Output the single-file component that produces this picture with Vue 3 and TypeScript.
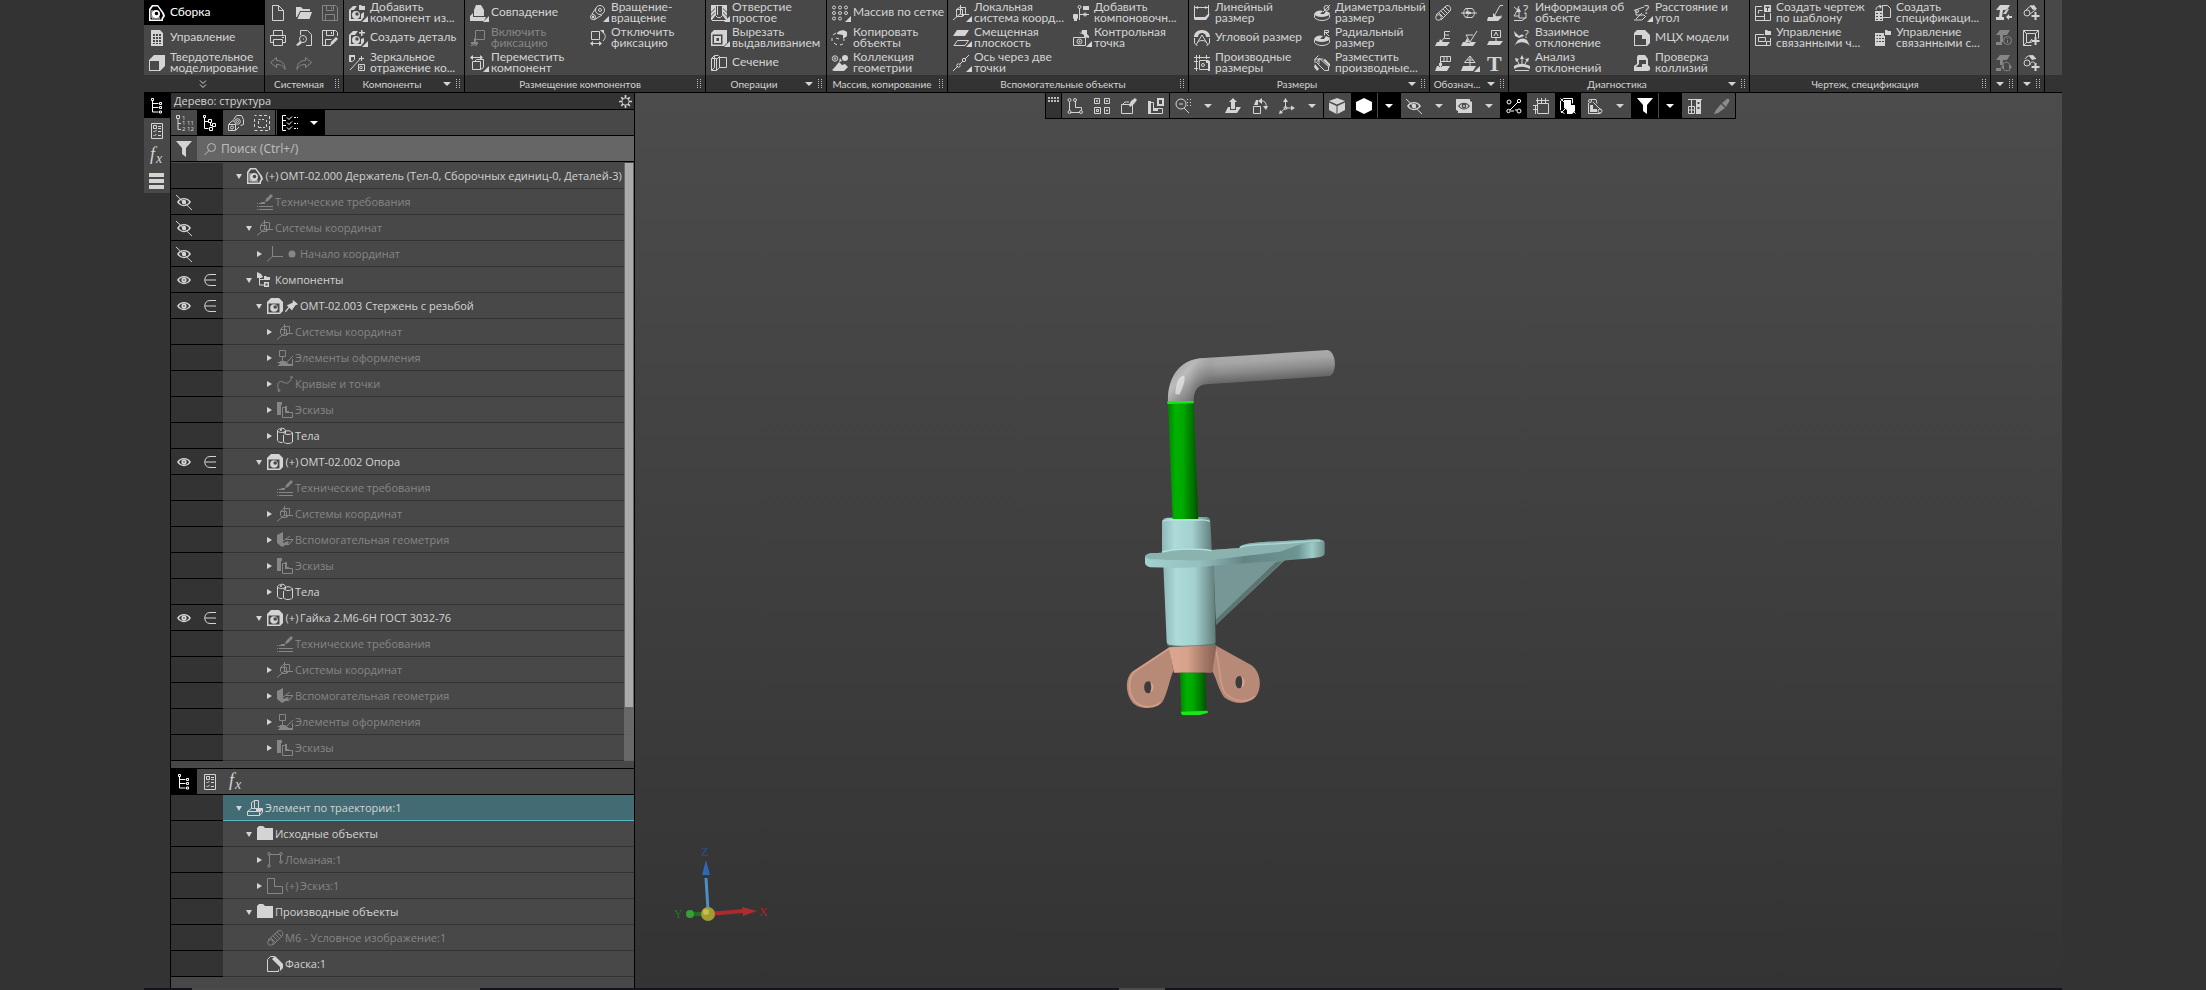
<script setup lang="ts">
import { ref } from 'vue'

interface Glyph { s?: string; f?: string; t?: { x: number; y: number; size: number; text: string }[] }
interface Cmd { icon: string; label?: string; title?: string; off?: boolean; more?: boolean }
interface Group { title: string; columns: Cmd[][]; arrow?: boolean; compact?: boolean }
interface Node { level: number; icon: string; label: string; arrow?: 'open' | 'closed'; dim?: boolean; eye?: 'on' | 'off'; member?: boolean; mark?: 'plus' | 'pin' | 'dot'; selected?: boolean }

const c = (x: number, y: number, r: number) => `M${x - r} ${y}a${r} ${r} 0 1 0 ${2 * r} 0a${r} ${r} 0 1 0 ${-2 * r} 0z`

const glyphs: Record<string, Glyph> = {
  assembly: { f: 'M0 4L3 0H9L15 8L16 11L14 14V16H0ZM1.500 5V14.500H12.500V13L14 11L13 8L8.500 1.500H4Z' + c(7, 9, 4) + c(7.5, 8.5, 1.8), s: 'M3 5v8h8' },
  sheet: { f: 'M2 0H11L14 3V16H2ZM4 4H6V6H4ZM7 4H9V6H7ZM10 4H12V6H10ZM4 7H6V9H4ZM7 7H9V9H7ZM10 7H12V9H10ZM4 10H6V12H4ZM7 10H9V12H7ZM10 10H12V12H10ZM4 13H6V14H4ZM7 13H9V14H7ZM10 13H12V14H10Z' },
  solid: { f: 'M0 5L5 0H16V11L11 16H0ZM1 6V15H10V6Z' },
  newDoc: { s: 'M2.500.500h6l5 5v10h-11zM8.500.500v5h5' },
  folderOpen: { f: 'M0 2H5L7 4H14V6H4L1 12H0ZM4.500 7H16L13.500 14H1.500Z' },
  save: { s: 'M.500.500h13l2 2v13H.500zM4.500.500v5h7v-5M3.500 15.500v-6h9v6M9.500 2v2' },
  saveAs: { s: 'M9 15.500H.500V.500h13l2 2V6M4.500.500v5h7v-5M3.500 15.500v-6h6M9.500 2v2', f: 'M8 16L9 12L14 7L16 9L11 14Z' },
  print: { s: 'M3.500 5.500v-5h9v5M3.500 12.500h-3v-7h15v7h-3M3.500 9.500h9v6h-9zM12 7.500h2' },
  preview: { s: 'M4.500 5V.500h7l4 4v11H10' + c(7, 9, 3.5) + 'M7 9h1', f: 'M4 11L6 13L2 16L0 15Z' },
  undo: { s: 'M6.500 2.500l-6 5l6 5v-3c4 0 7 1 8.500 5c0-6-3-9-8.500-9z' },
  redo: { s: 'M9.500 2.500l6 5l-6 5v-3c-4 0-7 1-8.500 5c0-6 3-9 8.500-9z' },
  addPart: { f: 'M0 5L4 1H8L5 5H2V14H12V9L15 7V12L12 16H0Z' + c(7, 10, 4) + c(8, 9, 1.7) + 'M10 0H12L13 1H16V5H10Z' },
  newPart: { f: 'M0 5L4 1H9L6 5H2V14H12V9L15 8V12L12 16H0Z' + c(7, 10, 4) + c(8, 9, 1.7) + 'M12 0H13.500V2H16V3.500H13.500V6H12V3.500H10V2H12Z' },
  mirror: { s: 'M.500.500h5v4l-2 2h-3zM1 15L13 2M9.500 9.500h6v6h-6z' + c(12, 12.500, 1.300), f: 'M12 1h1v2h2v1h-2v2h-1v-2h-2v-1h2zM0 0h6v2h-4v4h-2z' },
  mate: { f: 'M6 0H11L14 5V11H4V5ZM0 11L3 8V12H16L14 16H0Z' },
  fix: { s: 'M5.500.500h9v9h-9zM4.500 9v3', f: 'M1 12H8V14H1ZM0 16L3 14H5L2 16ZM4 16L6 14H8L6 16ZM4 8h2v4h-2z' },
  move: { s: 'M2.500 6.500h8v8h-8zM2 2.500h9M4.500 6.500l2-2h7v8l-3 2', f: 'M0 2.500L3 0V5ZM13 2.500L10 0V5Z' },
  rotateMate: { s: c(10, 5, 4.500) + c(3, 12, 2.500) + c(10, 5, 1.500) + 'M2 9L6 3M4 15l8-5', f: c(3, 12, 1.2) },
  unfix: { s: 'M1.500 1.500h8v8h-8zM13 2c3 3 3 6 0 9M1 13.500h10', f: 'M0 13.500L3 11V16ZM12 13.500L9 11V16ZM10 0H14V4Z' },
  hole: { s: 'M.500.500h15M4.500.500v10l2 2h3l2-2v-10M1 15.500h14', f: 'M0 0H4V3L0 7ZM0 8L4 4V7L0 11ZM0 12L4 8V11L1 15H0ZM16 0H12V3L16 7ZM16 8L12 4V7L16 11ZM16 12L12 8V11L15 15H16ZM6 1h1v9H6z' },
  cut: { f: 'M0 3L3 0H16V13L13 16H0ZM1.500 4.500V14.500H11.500V4.500ZM3 6H10V13H3ZM5.500 8V11H8V8Z' },
  section: { s: 'M.500 3.500l3-3v12l-3 3zM.500 3.500h5v12h-5M8.500 2.500h7v10h-7zM5.500 4.500l3-3v11l-3 3zM3.500.500h4' },
  array: { s: c(2, 2.500, 1.500) + c(8, 2.500, 1.500) + c(14, 2.500, 1.500) + c(2, 8, 1.500) + c(8, 8, 1.500) + c(14, 8, 1.500) + c(2, 13.500, 1.500) + c(8, 13.500, 1.500) },
  copyObj: { f: 'M5 3C7 0 12-1 15 2V6L11 9V5L5 4Z', s: 'M4 3L1 5M0 8v3M2 13l3 2M8 15l3-1M12 11V9M4 8l3 1' },
  collection: { s: c(3, 3.500, 2.700) + c(3, 3.500, .8), f: c(13, 3, 3) + 'M0 15L3 12L7 7L10 10L13 9L16 12L12 16H2ZM8 3L10 6L7 7Z' },
  localCs: { s: 'M7.500 0v9M7.500 9.500H16M0 15L7 9M3.500 8.500v-4l3-2h6v6l-3 3h-6zM3.500 4.500h6v7' },
  offsetPlane: { f: 'M4 0H16L12 6H0Z', s: 'M4.500 10.500h11l-3.500 5H1z' },
  axis: { s: 'M0 16L5 11M7 9l3-3M12 4l4-4' + c(5.500, 10.500, 1.700) + c(11, 5, 1.700) },
  layout: { s: 'M6.500 3v12M6.500 9.500H16' + c(6.500, 2, 1.500) + c(12, 9.500, 1.500) + 'M.500 9.500h4v4h-4z', f: 'M10 1h6v4h-6zM1 10h3v6h-3z' },
  checkpoint: { s: 'M.500 7.500h12v8H.500z' + c(6.500, 11.500, 2.500), f: 'M6 2L8 4L9 0H14V4L16 6V8L11 7V5Z' + c(6.500, 11.500, 1) },
  linear: { s: 'M.500.500v14M14.500 0v10M1 2.500h13M.500 13.500h11l4-4', f: 'M1 12H11L15 8V11L12 15H1ZM1 2.500l3-1.500v3zM14 2.500l-3-1.500v3z' },
  angular: { f: 'M8 0C14 0 16 4 16 7H12C12 4 10 3 8 3S4 4 4 7H0C0 4 2 0 8 0Z', s: 'M2 15L8 5l6 10M4 12c2-2 6-2 8 0M.500 8v5l3 3M15.500 8v5l-3 3' },
  derived: { s: 'M0 2.500h16M2.500 0v16M5.500 0v4M12.500 0v4M0 6.500h4M0 13.500h4M5.500 5.500h9v9h-9z' + c(9, 10, 1.500), f: 'M12 6H16V16H14V8H12Z' },
  diameter: { s: c(12.500, 3, 2.500) + 'M9 7L16 0M.500 9.500v3c3 4 12 4 15 0v-3', f: 'M0 9C2 5 7 5 9 6L6 9L10 9L12 6L16 8C15 13 2 13 0 9Z' },
  radial: { s: 'M10.500 5.500v-5h4v2h-4M12 3l3 3M.500 9.500v3c3 4 12 4 15 0v-3', f: 'M0 9C2 5 7 5 9 6L6 9L10 9L12 6L16 8C15 13 2 13 0 9Z' },
  place: { s: 'M.500 4.500l4-4M1 8V4h4M5.500 3.500l9 8v4h-4l-8-8zM5 9V4h4', f: 'M11 4L16 9V12L9 5ZM1 9L5 14L3 16L0 12Z' },
  thread: { s: 'M1 10L11 1c3-2 6 2 4 5L6 15M4 8l5 5M6 6l5 5M8 4l5 5M10 2l5 5' + c(3.500, 12.500, 2.800) },
  centre: { s: 'M5 3.500h6c3 1 3 8 0 9H5M0 8h16M5 3.500c-3 1-3 8 0 9c3-1 3-8 0-9z', f: 'M5 6L10 7V9H5Z' },
  leader: { s: 'M16 .500h-3l-6 11M9 12l6-1', f: 'M1 12H15L11 16H0ZM6 8L10 12H6Z' },
  leaderE: { s: 'M15 1.500H9.500v7H15M9.500 5H14M9 8l-4 5', f: 'M2 12H15L12 16H0ZM5 9L8 12H4Z' },
  rough: { s: 'M16 1L9 12L5 5h7', f: 'M2 12H15L12 16H0ZM6 8L9 13L4 12Z' },
  base: { s: 'M4.500.500h9v7h-9zM9 8v4M7 6l2-4l2 4', f: 'M2 11H16L13 15H0Z' },
  tolerance: { s: 'M5.500 1.500h10v5h-10zM9 2v4M12 2v4M5.500 6v7', f: 'M2 11H15L12 16H0ZM4 8H7V12H4Z' },
  mark: { s: 'M3.500 7.500L9 1l5 6.500zM9 1v11M6 5h6', f: 'M2 11H15L12 16H0Z' },
  text: { t: [{ x: 0, y: 16, size: 22, text: 'T' }] },
  info: { s: 'M0 2l5 4M5 1L3 6l-3 5h5M5 6v7h7V8M0 15.500h8l4-3', f: 'M5 3L7 7H2Z', t: [{ x: 9, y: 9, size: 12, text: '?' }] },
  mutual: { f: 'M0 1L5 6C7 4 9 4 10 6L5 8L1 6ZM0 16C4 11 12 11 16 16L13 10C10 8 7 8 4 10Z', t: [{ x: 10, y: 8, size: 11, text: '?' }] },
  analysis: { f: 'M0 11C5 8 11 8 16 11V14C11 11 5 11 0 14ZM8 0L10 4H6ZM1 3L5 4L2 7ZM15 3L11 4L14 7ZM1 15H15V16H1Z', s: 'M8 3v6M3 5l2 4M13 5l-2 4' },
  distance: { s: 'M0 5.500L10 2M2 6v4h8l2 2M0 15h8l4-4' + c(3, 6, 1.500) + 'M2 14L8 8', t: [{ x: 10, y: 9, size: 12, text: '?' }] },
  mass: { f: 'M0 3L3 0H11L16 5V13L13 16H0ZM1 5V15H12V9H8V5Z' },
  collision: { f: 'M4 0H11L14 4V10L16 12V15L14 16H0V11L3 9V2ZM5 5V9L2 12H8V9H12V5Z' },
  drawing: { s: 'M7 1.500H.500v14h15V8M.500 11.500h9M3.500 8.500v-3h4M9.500 8.500v7', f: 'M9 0H16V7H9ZM10.500 1.500V3H12V6H13V3H14.500V1.500Z' },
  drawings: { s: 'M9 4.500H.500v11h15V8M3.500 7.500h7v4h-7zM11.500 15v-3.500h4', f: 'M10 0H12L13 1H16V5H10Z' },
  spec: { s: 'M7.500.500h5l3 3v9h-8zM1 5c0-3 2-4 5-4', f: 'M4 0l3 1l-2 3zM0 6H8V16H0ZM1 8V9H3V8ZM5 8V9H7V8ZM1 11V12H3V11ZM5 11V12H7V11ZM1 14V15H3V14ZM5 14V15H7V14Z' },
  specs: { f: 'M0 3H9V6H10V16H0ZM1.500 5V6H3V5ZM4 5V6H6V5ZM1.500 8V9H3V8ZM4 8V9H6V8ZM7 8V9H9V8ZM1.500 11V12H3V11ZM4 11V12H6V11ZM7 11V12H9V11ZM10 0H12L13 1H16V5H10Z' },
  beamIn: { f: 'M4 0H14L11 5H0ZM4 5H7L6 12H3ZM0 12H8V15H0ZM11 4H13L10 9H7ZM10 12L13 9V11H16V13H13V15Z' },
  beamInfo: { f: 'M4 0H14L11 5H0ZM4 5H7V12H4ZM0 12H6V15H0Z', s: c(11.500, 10.500, 4) + 'M11.500 8v1M11.500 10v3' },
  beamSync: { f: 'M4 0H14L11 5H0ZM4 5H7V10H4ZM0 13H5V16H0ZM5 12l3-3v6zM16 12l-3-3v6z', s: 'M7 9c2-3 6-2 7 1M14 15c-2 1-4 1-6 0' },
  pipeAdd: { s: c(4, 8, 3) + 'M3 5L8 .500l5 4L7 9', f: 'M7 1L11 0L14 4L10 5ZM11.500 7h2v3h3v2h-3v3h-2v-3h-3v-2h3z' },
  frameAdd: { s: 'M.500.500h15v8M.500.500v15h8M3.500 3.500h9v5M3.500 3.500v9h5M.500.500l3 3M15.500.500l-3 3M.500 15.500l3-3M6 13l3-4', f: 'M11.500 7h2v3h3v2h-3v3h-2v-3h-3v-2h3z' },
  bendAdd: { s: c(4, 8, 3) + 'M2 4c2-4 8-5 11 0M7 10c0-3 3-4 5-2', f: 'M6 1L10 0L13 4L9 5ZM11.500 8h2v3h3v2h-3v3h-2v-3h-3v-2h3z' },
  tree: { s: 'M3.500 3v11M3.500 5.500h6M3.500 9.500h6M3.500 14h6M2.500.500h2v2h-2zM10.500 4.500h2v2h-2zM10.500 8.500h2v2h-2zM10.500 13h2v2h-2z' },
  params: { s: 'M2.500.500h11v15h-11zM4.500 2.500h3v3h-3zM9 3.500h3M9 5.500h3M4.500 8l1 1l2-2M9 8.500h3M4.500 12l1 1l2-2M9 12.500h3' },
  fx: { t: [{ x: 1, y: 12, size: 18, text: 'f' }, { x: 7, y: 15, size: 14, text: 'x' }] },
  layers: { f: 'M0 0H15V4H0ZM0 6H15V10H0ZM0 12H15V16H0Z' },
  treeNumbers: { s: 'M.500.500h3v3h-3zM2 3.500v11M2 8.500h3M2 14.500h3', t: [{ x: 6, y: 5, size: 6, text: '1' }, { x: 6, y: 10, size: 6, text: '1 11' }, { x: 6, y: 16, size: 6, text: '2 12' }] },
  treeParts: { s: 'M1.500.500h2v2h-2zM2.500 3v10.500M2.500 6.500h4M2.500 13.500h4M6.500 4.500h3v3h-3zM10.500 8.500h3v3h-3zM7.500 12.500h3v3h-3zM8.500 8v2.500h2' },
  related: { s: 'M5.500 4.500l3-4h5l2 4v5l-3 1M.500 9.500h7v6h-7z' + c(9.500, 6.500, 2.800) + c(9.500, 6.500, 1) + c(4, 12.500, 1.500) + 'M1 9l3-3h2M8 15l3-3' },
  selectBox: { s: 'M.500.500h2M5 .500h3M10 .500h3M15.500 1v3M15.500 6v3M15.500 11v4M.500 4v3M.500 9v3M.500 15.500h3M6 15.500h3M11 15.500h3M4.500 4.500h2M8 4.500h2M12.500 5v2M12.500 9v3M4.500 6v3M4.500 11v1.500h3M9 12.500h2' },
  checkTree: { s: 'M4 .500H.500v15H4M.500 5.500H4M.500 10.500H4M5 2.500l2 2l3-3M5 7.500l2 2l3-3M5 12.500l2 2l3-3M12 2.500h2M15 2.500h1M12 8.500h2M15 8.500h1M12 13.500h2M15 13.500h1' },
  funnel: { f: 'M0 0H16L10 7V16L6 13V7Z' },
  search: { s: c(8.500, 6.500, 4) + 'M6 9.500L1.500 14' },
  gear: { s: c(8, 8, 4.500), f: 'M7 0H9V4H7ZM7 12H9V16H7ZM0 7H4V9H0ZM12 7H16V9H12ZM2 3.500L3.500 2L6 4.500L4.500 6ZM14 3.500L12.500 2L10 4.500L11.500 6ZM2 12.500L3.500 14L6 11.500L4.500 10ZM14 12.500L12.500 14L10 11.500L11.500 10Z' },
  eye: { f: 'M1 8C4 2.500 12 2.500 15 8C12 13.500 4 13.500 1 8ZM3 8C5 11.800 11 11.800 13 8C11 4.200 5 4.200 3 8Z' + c(8, 8, 2.600) + c(8, 8, .8) },
  eyeOff: { f: 'M1 8C4 2.500 12 2.500 15 8C12 13.500 4 13.500 1 8ZM3 8C5 11.800 11 11.800 13 8C11 4.200 5 4.200 3 8Z' + c(8, 8, 2.200), s: 'M0 1L16 16' },
  member: { s: 'M14 2.500H8c-7 0-7 11 0 11h6M3 8h11' },
  requirements: { s: 'M0 9.500h1M2 9.500h6M0 12.500h1M2 12.500h14M0 15.500h1M2 15.500h14', f: 'M8 8L9 5L14 0L16 2L11 7ZM4 8h4v1H4z' },
  coords: { s: 'M7.500 0v10M7 9.500h9M0 15.500L7 9.500M3.500 9.500v-4l3-3h6v6l-3 3h-4zM4 5.500h5.500V11' },
  origin: { s: 'M5.500 0v10M5 10.500h11M0 15.500L5.500 10.500' },
  components: { f: 'M0 0L4 2L6 5L4 6H0ZM7 4H9L10 5H13V8H7ZM7 10H12V15H7ZM8.500 11.500V13.500H10.500V11.500Z', s: 'M2.500 5v8H7M2.500 7.500H7' },
  part: { f: 'M0 4L4 0H12L16 4V13L13 16H0ZM1.500 5.500V14.500H12.500V5.500Z' + c(7, 10, 3.800) + c(8.200, 9, 1.800) },
  design: { s: 'M2.500.500h6v6h-6zM5.500 7v5M.500 12.500h9M9 13l7-7M1 15.500h14.500V9', f: 'M3 11H8L12 14H16V16H2Z' },
  curve: { s: 'M2 15C-1 8 2 4 6 6s6 2 9-5M13 1h3' + c(2, 14.500, 1) },
  sketches: { s: 'M5.500 5.500h4v5h6v5h-10z', f: 'M0 0H5V3H4V13H0ZM8 4h2v5h2v2H8z' },
  bodies: { s: 'M.500 2.500c2-3 7-3 8 0v3M.500 2.500v10c1 2 3 2 5 2M.500 3c2 2 6 2 8 0M6.500 7v7c2 2 7 2 9 0V5c-2-3-7-3-9 0c2 2 7 2 9 0', f: c(4, 2, 1) },
  auxGeom: { s: 'M5 12.500h7l4-5H9M6 9l7-5', f: 'M0 3L6 0V11L11 9L12 11L5 15L0 11Z' },
  sweep: { s: 'M.500 11.500l4-3h11l-3 4v3h-12zM4.500 8.500v-6l3-2h4v8M7.500.500v8M.500 11.500h12M12 12l3.500-3v3l-3 3.500', f: 'M9 9H16L12 12H9Z' },
  folder: { f: 'M0 2L2 0H6L8 2H16V14H0Z' },
  polyline: { s: 'M2.500 3v10M3 2.500h10M13.500 3v6' + c(2, 1.800, 1.300) + c(14, 1.800, 1.300) + c(2, 14, 1.300) + c(14, 10, 1.300) },
  sketch: { s: 'M.500.500h7v8h8v7h-15z' },
  chamfer: { s: 'M.500 3.500l3-3h4M.500 3.500v12h11v-2', f: 'M5 3L8 0L16 8V12L13 15V11Z' },
  pin: { f: 'M9 1L15 6L12 7L9 11L8 13L5 10L1 15L0 14L4 9L2 7L5 6L9 4Z' },
  dot: { f: c(8, 8, 4) },
  sketchMode: { s: 'M2.500 4v9M3 14.500h10M14.500 12V9.500h-6V3' + c(2.500, 2, 1.500) + c(2.500, 14, 1.500) + c(14, 14, 1.500) + c(8, 2, 1.500) },
  grid4: { s: 'M.500.500h5v5h-5zM10.500.500h5v5h-5zM.500 9.500h6v6h-6zM10.500 9.500h5v6h-5zM2.500 2.500h1v1h-1zM12.500 2.500h1v1h-1zM2.500 11.500h2v2h-2zM12.500 12h1v1h-1z' },
  editBox: { s: 'M.500 6.500h11v9H.500zM2 6l2-2h4', f: 'M8 7L10 3L14 0L16 2L13 6L9 9Z' },
  partSketch: { s: 'M1.500 4.500h4v6h9v5h-13z', f: 'M9 0H16V8H9ZM11 2V6H14V2ZM0 3h3v13H0zM5 10h5v3H5z' },
  zoomArea: { s: c(6, 6, 5) + 'M9 10l5 5M12.500 1v1M15.500 1v1M12.500 4v1M15.500 4v1M12.500 7v1M15.500 7v1M4 6h4' },
  orient: { f: 'M8 0L12 4H10V11H6V4H4ZM3 9H5V12H11V9H16L12 15H0Z' },
  rotateView: { s: 'M1.500 8.500h7v7h-7zM8 3c4-1 7 2 6 6', f: 'M6 3L10 0V6ZM14 12L11 8H16ZM2 7h4V2H4z' },
  axes: { s: 'M6.500 3v7H14M6.500 10L1 15' + c(6.500, 10, 1.500), f: 'M6.500 0L9 4H4ZM16 10L12 7.500V12.500ZM0 16L1 12L4 15Z' },
  cubeShaded: { f: 'M8 0L16 3L8 6.500L0 3ZM0 4.500L7.500 8V16L0 12ZM16 4.500L8.500 8V16L16 12Z' },
  hexagon: { f: 'M8 0L16 4V12L8 16L0 12V4Z' },
  eyeBox: { f: 'M0 1H14V3L16 4V15H2V13L0 12ZM2 8C5 3.500 11 3.500 14 8C11 12.500 5 12.500 2 8ZM3.500 8C6 11.500 10 11.500 12.500 8C10 4.500 6 4.500 3.500 8Z' + c(8, 8, 2.400) + c(8, 8, 1) },
  nodes: { s: c(3, 4, 2) + c(13, 3, 1.700) + c(2.500, 13, 1.700) + c(13, 13, 2) + 'M4 12L12 4M5 13h3M9 12h2' },
  dims: { s: 'M4.500 5.500h11v10h-11zM3 2.500h13M4.500 0v5M8.500 0v5M12.500 0v5M0 7.500h4M0 11.500h4M2.500 7v9' },
  crossCube: { f: 'M4 2H11V7H15V13L12 16H7V12L4 10Z', s: 'M.500.500l15 15M.500 12V3l3-2.500h9v5M1 15L7 9M.500 13l4 2.500' },
  lines: { s: 'M1.500 5v10.500h12M4 1.500h5l1 4M6 4l8 8' + c(3, 3, 1.500) + c(13, 13, 2), f: 'M3 7h3v4h4v3H3z' },
  crane: { s: 'M1.500 8.500h6v7h-6zM1 1.500h14M4.500 2v6M2 12h5M4.500 9v6', f: 'M9 1H14V16H9ZM10.500 4V6H12.500V4ZM10.500 9V11H12.500V9Z' },
  pipette: { f: 'M11 3C13-1 17 1 15 4L13 7L12 9L8 5L9 4ZM7 6L11 10L4 15L0 16L2 12Z' },
}

const modes: Cmd[] = [
  { icon: 'assembly', label: 'Сборка' },
  { icon: 'sheet', label: 'Управление' },
  { icon: 'solid', label: 'Твердотельное\nмоделирование' },
]
const mode = ref(0)

const groups: Group[] = [
  { title: 'Системная', compact: true, columns: [
    [{ icon: 'newDoc', title: 'Создать' }, { icon: 'print', title: 'Печать' }, { icon: 'undo', title: 'Отменить', off: true }],
    [{ icon: 'folderOpen', title: 'Открыть' }, { icon: 'preview', title: 'Просмотр' }, { icon: 'redo', title: 'Повторить', off: true }],
    [{ icon: 'save', title: 'Сохранить', off: true }, { icon: 'saveAs', title: 'Сохранить как' }]] },
  { title: 'Компоненты', arrow: true, columns: [
    [{ icon: 'addPart', label: 'Добавить\nкомпонент из...', more: true }, { icon: 'newPart', label: 'Создать деталь', more: true }, { icon: 'mirror', label: 'Зеркальное\nотражение ко...' }]] },
  { title: 'Размещение компонентов', columns: [
    [{ icon: 'mate', label: 'Совпадение', more: true }, { icon: 'fix', label: 'Включить\nфиксацию', off: true }, { icon: 'move', label: 'Переместить\nкомпонент', more: true }],
    [{ icon: 'rotateMate', label: 'Вращение-\nвращение', more: true }, { icon: 'unfix', label: 'Отключить\nфиксацию' }]] },
  { title: 'Операции', arrow: true, columns: [
    [{ icon: 'hole', label: 'Отверстие\nпростое', more: true }, { icon: 'cut', label: 'Вырезать\nвыдавливанием', more: true }, { icon: 'section', label: 'Сечение' }]] },
  { title: 'Массив, копирование', columns: [
    [{ icon: 'array', label: 'Массив по сетке', more: true }, { icon: 'copyObj', label: 'Копировать\nобъекты' }, { icon: 'collection', label: 'Коллекция\nгеометрии' }]] },
  { title: 'Вспомогательные объекты', columns: [
    [{ icon: 'localCs', label: 'Локальная\nсистема коорд...', more: true }, { icon: 'offsetPlane', label: 'Смещенная\nплоскость', more: true }, { icon: 'axis', label: 'Ось через две\nточки', more: true }],
    [{ icon: 'layout', label: 'Добавить\nкомпоновочн...' }, { icon: 'checkpoint', label: 'Контрольная\nточка', more: true }]] },
  { title: 'Размеры', arrow: true, columns: [
    [{ icon: 'linear', label: 'Линейный\nразмер' }, { icon: 'angular', label: 'Угловой размер' }, { icon: 'derived', label: 'Производные\nразмеры' }],
    [{ icon: 'diameter', label: 'Диаметральный\nразмер' }, { icon: 'radial', label: 'Радиальный\nразмер' }, { icon: 'place', label: 'Разместить\nпроизводные...' }]] },
  { title: 'Обознач...', arrow: true, compact: true, columns: [
    [{ icon: 'thread', title: 'Резьба' }, { icon: 'leaderE', title: 'Позиция' }, { icon: 'tolerance', title: 'Допуск формы' }],
    [{ icon: 'centre', title: 'Ось' }, { icon: 'rough', title: 'Шероховатость' }, { icon: 'mark', title: 'Клеймо', more: true }],
    [{ icon: 'leader', title: 'Выноска' }, { icon: 'base', title: 'База' }, { icon: 'text', title: 'Текст' }]] },
  { title: 'Диагностика', arrow: true, columns: [
    [{ icon: 'info', label: 'Информация об\nобъекте' }, { icon: 'mutual', label: 'Взаимное\nотклонение' }, { icon: 'analysis', label: 'Анализ\nотклонений' }],
    [{ icon: 'distance', label: 'Расстояние и\nугол', more: true }, { icon: 'mass', label: 'МЦХ модели' }, { icon: 'collision', label: 'Проверка\nколлизий' }]] },
  { title: 'Чертеж, спецификация', columns: [
    [{ icon: 'drawing', label: 'Создать чертеж\nпо шаблону' }, { icon: 'drawings', label: 'Управление\nсвязанными ч...' }],
    [{ icon: 'spec', label: 'Создать\nспецификаци...' }, { icon: 'specs', label: 'Управление\nсвязанными с...' }]] },
  { title: '', arrow: true, compact: true, columns: [
    [{ icon: 'beamIn', title: 'Профиль' }, { icon: 'beamInfo', title: 'Свойства профиля', off: true }, { icon: 'beamSync', title: 'Обновить профиль', off: true }]] },
  { title: '', arrow: true, compact: true, columns: [
    [{ icon: 'pipeAdd', title: 'Труба' }, { icon: 'frameAdd', title: 'Каркас' }, { icon: 'bendAdd', title: 'Отвод' }]] },
]

const rail: Cmd[] = [
  { icon: 'tree', title: 'Дерево' }, { icon: 'params', title: 'Параметры' },
  { icon: 'fx', title: 'Переменные' }, { icon: 'layers', title: 'Слои' },
]

const nodes: Node[] = [
  { level: 0, icon: 'assembly', mark: 'plus', label: 'ОМТ-02.000 Держатель (Тел-0, Сборочных единиц-0, Деталей-3)', arrow: 'open' },
  { level: 1, icon: 'requirements', label: 'Технические требования', dim: true, eye: 'off' },
  { level: 1, icon: 'coords', label: 'Системы координат', dim: true, eye: 'off', arrow: 'open' },
  { level: 2, icon: 'origin', mark: 'dot', label: 'Начало координат', dim: true, eye: 'off', arrow: 'closed' },
  { level: 1, icon: 'components', label: 'Компоненты', eye: 'on', member: true, arrow: 'open' },
  { level: 2, icon: 'part', mark: 'pin', label: 'ОМТ-02.003 Стержень с резьбой', eye: 'on', member: true, arrow: 'open' },
  { level: 3, icon: 'coords', label: 'Системы координат', dim: true, arrow: 'closed' },
  { level: 3, icon: 'design', label: 'Элементы оформления', dim: true, arrow: 'closed' },
  { level: 3, icon: 'curve', label: 'Кривые и точки', dim: true, arrow: 'closed' },
  { level: 3, icon: 'sketches', label: 'Эскизы', dim: true, arrow: 'closed' },
  { level: 3, icon: 'bodies', label: 'Тела', arrow: 'closed' },
  { level: 2, icon: 'part', mark: 'plus', label: 'ОМТ-02.002 Опора', eye: 'on', member: true, arrow: 'open' },
  { level: 3, icon: 'requirements', label: 'Технические требования', dim: true },
  { level: 3, icon: 'coords', label: 'Системы координат', dim: true, arrow: 'closed' },
  { level: 3, icon: 'auxGeom', label: 'Вспомогательная геометрия', dim: true, arrow: 'closed' },
  { level: 3, icon: 'sketches', label: 'Эскизы', dim: true, arrow: 'closed' },
  { level: 3, icon: 'bodies', label: 'Тела', arrow: 'closed' },
  { level: 2, icon: 'part', mark: 'plus', label: 'Гайка 2.М6-6Н ГОСТ 3032-76', eye: 'on', member: true, arrow: 'open' },
  { level: 3, icon: 'requirements', label: 'Технические требования', dim: true },
  { level: 3, icon: 'coords', label: 'Системы координат', dim: true, arrow: 'closed' },
  { level: 3, icon: 'auxGeom', label: 'Вспомогательная геометрия', dim: true, arrow: 'closed' },
  { level: 3, icon: 'design', label: 'Элементы оформления', dim: true, arrow: 'closed' },
  { level: 3, icon: 'sketches', label: 'Эскизы', dim: true, arrow: 'closed' },
]
const relations: Node[] = [
  { level: 0, icon: 'sweep', label: 'Элемент по траектории:1', arrow: 'open', selected: true },
  { level: 1, icon: 'folder', label: 'Исходные объекты', arrow: 'open' },
  { level: 2, icon: 'polyline', label: 'Ломаная:1', dim: true, arrow: 'closed' },
  { level: 2, icon: 'sketch', mark: 'plus', label: 'Эскиз:1', dim: true, arrow: 'closed' },
  { level: 1, icon: 'folder', label: 'Производные объекты', arrow: 'open' },
  { level: 2, icon: 'thread', label: 'М6 - Условное изображение:1', dim: true },
  { level: 2, icon: 'chamfer', label: 'Фаска:1' },
]
const lists = [nodes, relations]

interface Tool { icon?: string; title: string; on?: boolean; off?: boolean }
const drop = (title: string, on = false): Tool => ({ title, on })
const tools: Tool[][] = [
  [{ icon: 'sketchMode', title: 'Эскиз' }, { icon: 'grid4', title: 'Массив' }, { icon: 'editBox', title: 'Редактировать' }, { icon: 'partSketch', title: 'Деталь на месте' }],
  [{ icon: 'zoomArea', title: 'Масштаб' }, drop('Варианты масштаба'), { icon: 'orient', title: 'Нормально к' }, { icon: 'rotateView', title: 'Повернуть' }, { icon: 'axes', title: 'Ориентация' }, drop('Варианты ориентации')],
  [{ icon: 'cubeShaded', title: 'Перспектива' }, { icon: 'hexagon', title: 'Полутоновое', on: true }, drop('Варианты отображения', true)],
  [{ icon: 'eyeOff', title: 'Скрыть' }, drop('Варианты скрытия'), { icon: 'eyeBox', title: 'Показать' }, drop('Варианты показа')],
  [{ icon: 'nodes', title: 'Привязки', on: true }, { icon: 'dims', title: 'Размеры' }, { icon: 'crossCube', title: 'Сечение', on: true }, { icon: 'lines', title: 'Линии' }, drop('Варианты линий')],
  [{ icon: 'funnel', title: 'Фильтр', on: true }, drop('Варианты фильтра', true)],
  [{ icon: 'crane', title: 'Измерить' }, { icon: 'pipette', title: 'Пипетка', off: true }],
]

const query = ref('')

const Icon = (props: { name: string }) => {
  const g = glyphs[props.name]
  return h('svg', { class: 'icon', viewBox: '0 0 16 16', 'aria-hidden': 'true' }, [
    g.f ? h('path', { d: g.f, fill: 'currentColor', 'fill-rule': 'evenodd' }) : null,
    g.s ? h('path', { d: g.s, fill: 'none', stroke: 'currentColor' }) : null,
    ...(g.t ?? []).map(t => h('text', {
      x: t.x, y: t.y, fill: 'currentColor', 'font-size': t.size,
      class: props.name === 'fx' ? 'icon-italic' : props.name === 'text' ? 'icon-serif' : undefined,
    }, t.text)),
  ])
}
Icon.props = ['name']
</script>

<script lang="ts">
import { h } from 'vue'
</script>

<template>
  <div class="app">
    <header class="ribbon">
      <section class="group">
        <div class="modes">
          <button v-for="(m, i) in modes" :key="m.icon" class="cmd" :class="{ active: mode === i }" @click="mode = i">
            <span class="slot"><Icon :name="m.icon" /></span>
            <span class="cmd-label">{{ m.label }}</span>
          </button>
        </div>
        <div class="group-foot">
          <button class="expand" aria-label="Развернуть">
            <svg width="8" height="8" viewBox="0 0 8 8"><path d="M1 .5l3 3 3-3M1 4.500l3 3 3-3" fill="none" stroke="currentColor" /></svg>
          </button>
        </div>
      </section>
      <section v-for="(g, gi) in groups" :key="gi" class="group">
        <div class="columns">
          <div v-for="(col, ci) in g.columns" :key="ci" class="column" :class="{ compact: g.compact }">
            <button v-for="cmd in col" :key="cmd.icon" class="cmd" :disabled="cmd.off" :aria-label="cmd.title">
              <span class="slot"><Icon :name="cmd.icon" /><i v-if="cmd.more" class="corner"></i></span>
              <span v-if="cmd.label" class="cmd-label">{{ cmd.label }}</span>
            </button>
          </div>
        </div>
        <div class="group-foot">
          <span class="group-title">{{ g.title }}</span>
          <button v-if="g.arrow" class="foot-arrow" aria-label="Еще команды"><i class="caret"></i></button>
          <i class="grip"></i>
        </div>
      </section>
      <div class="group tail"><div class="columns"></div><div class="group-foot"></div></div>
    </header>

    <main class="work">
      <nav class="rail">
        <button v-for="(r, i) in rail" :key="r.icon" class="tool" :class="{ on: i === 0 }" :aria-label="r.title"><Icon :name="r.icon" /></button>
      </nav>

      <aside class="panel">
        <div class="panel-title"><h2>Дерево: структура</h2><button class="settings" aria-label="Настройка"><Icon name="gear" /></button></div>
        <div class="panel-tools">
          <button class="tool" aria-label="Последовательность"><Icon name="treeNumbers" /></button>
          <button class="tool on" aria-label="Структура"><Icon name="treeParts" /></button>
          <button class="tool" aria-label="Связи"><Icon name="related" /></button>
          <button class="tool" aria-label="Область выбора"><Icon name="selectBox" /></button>
          <i class="split"></i>
          <button class="tool on" aria-label="Состав"><Icon name="checkTree" /></button>
          <button class="tool narrow on" aria-label="Варианты состава"><i class="caret"></i></button>
        </div>
        <div class="search-bar">
          <button class="tool" aria-label="Фильтр"><Icon name="funnel" /></button>
          <label class="search"><Icon name="search" /><input v-model="query" type="text" placeholder="Поиск (Ctrl+/)" aria-label="Поиск" /></label>
        </div>
        <template v-for="(list, li) in lists" :key="li">
          <div v-if="li === 1" class="panel-tabs">
            <button class="tool on" aria-label="Отношения"><Icon name="tree" /></button>
            <button class="tool" aria-label="Параметры"><Icon name="params" /></button>
            <button class="tool" aria-label="Переменные"><Icon name="fx" /></button>
          </div>
          <div class="tree-box">
            <ul class="tree">
              <li v-for="(n, i) in list" :key="i" class="row" :class="{ dim: n.dim, selected: n.selected }">
                <span class="state"><Icon v-if="n.eye" :name="n.eye === 'on' ? 'eye' : 'eyeOff'" /></span>
                <span class="state"><Icon v-if="n.member" name="member" /></span>
                <span class="node" :class="'level-' + n.level">
                  <button v-if="n.arrow" class="toggle" :class="n.arrow" aria-label="Развернуть"></button>
                  <i v-else class="toggle"></i>
                  <Icon :name="n.icon" />
                  <span v-if="n.mark === 'plus'" class="mark">(+)</span>
                  <span v-else-if="n.mark" class="mark"><Icon :name="n.mark" /></span>
                  <span class="name">{{ n.label }}</span>
                </span>
              </li>
            </ul>
            <div v-if="li === 0" class="scroll"><div class="thumb"></div></div>
          </div>
        </template>
      </aside>

      <section class="viewport">
        <div class="toolbar">
          <span class="toolbar-grip"><i></i></span>
          <div v-for="(set, si) in tools" :key="si" class="tool-set">
            <button v-for="t in set" :key="t.title" class="tool" :class="{ on: t.on, narrow: !t.icon, faded: t.off }" :aria-label="t.title">
              <Icon v-if="t.icon" :name="t.icon" /><i v-else class="caret"></i>
            </button>
          </div>
        </div>

        <svg class="model" viewBox="0 0 780 1200" role="img" aria-label="Держатель">
          <defs>
            <linearGradient id="steel" x1="500" y1="70" x2="506" y2="153" gradientUnits="userSpaceOnUse">
              <stop offset="0" stop-color="#aaa" /><stop offset=".25" stop-color="#a6a6a6" /><stop offset=".6" stop-color="#8b8b8b" /><stop offset=".85" stop-color="#717171" /><stop offset="1" stop-color="#626262" />
            </linearGradient>
            <linearGradient id="elbow" x1="215" y1="110" x2="305" y2="195" gradientUnits="userSpaceOnUse">
              <stop offset="0" stop-color="#a2a2a2" /><stop offset=".35" stop-color="#bcbcbc" /><stop offset=".65" stop-color="#959595" /><stop offset="1" stop-color="#686868" />
            </linearGradient>
            <linearGradient id="join" x1="270" y1="0" x2="350" y2="0" gradientUnits="userSpaceOnUse">
              <stop offset="0" stop-color="#fff" /><stop offset="1" stop-color="#000" />
            </linearGradient>
            <mask id="elbowMask"><rect x="0" y="0" width="780" height="400" fill="url(#join)" /></mask>
            <linearGradient id="green"><stop offset="0" stop-color="#008400" /><stop offset=".25" stop-color="#00b200" /><stop offset=".5" stop-color="#00a800" /><stop offset=".8" stop-color="#007400" /><stop offset="1" stop-color="#005000" /></linearGradient>
            <linearGradient id="aqua"><stop offset="0" stop-color="#8fb8b7" /><stop offset=".25" stop-color="#acdbda" /><stop offset=".6" stop-color="#a3d1cf" /><stop offset=".85" stop-color="#7a9c9a" /><stop offset="1" stop-color="#5f7b79" /></linearGradient>
            <linearGradient id="edge"><stop offset="0" stop-color="#a3d1cf" /><stop offset=".3" stop-color="#94c0bd" /><stop offset=".55" stop-color="#648484" /><stop offset=".85" stop-color="#6d9592" /><stop offset=".93" stop-color="#9ecac8" /><stop offset="1" stop-color="#6f918e" /></linearGradient>
            <linearGradient id="copper"><stop offset="0" stop-color="#dca58f" /><stop offset=".4" stop-color="#d6a18b" /><stop offset=".75" stop-color="#a37867" /><stop offset="1" stop-color="#876152" /></linearGradient>
          </defs>
          <path d="M204 214C202 142 240 85 315 84L683 60Q703 66 705 100Q704 132 690 138L318 163C290 166 281 184 281 214Z" fill="url(#steel)" />
          <path d="M204 214C202 142 240 85 315 84L350 82L350 161L318 163C290 166 281 184 281 214Z" fill="url(#elbow)" mask="url(#elbowMask)" />
          <path d="M226 192C227 158 238 137 252 137C258 145 250 170 238 194Z" fill="#ececec" opacity=".65" />
          <path d="M204 216H281L295 568H218Z" fill="url(#green)" />
          <path d="M202 213H281V220L202 222Z" fill="#18e818" />
          <path d="M186 578Q186 565 202 563L218 563V567H295V561L320 561Q331 563 331 574L337 690H186Z" fill="url(#aqua)" />
          <path d="M188 574Q198 568 220 570L295 570Q318 568 329 574" fill="none" stroke="#b8e2e0" stroke-width="4" />
          <path d="M340 700L555 690L348 884Z" fill="#769795" />
          <path d="M548 694L348 884V868L528 696Z" fill="#5b7573" />
          <path d="M190 706H342L347 938Q340 947 310 948H220Q201 948 200 936Z" fill="url(#aqua)" />
          <path d="M135 681Q137 671 158 670L186 668C210 660 270 657 335 660L418 654C420 644 442 640 490 636L650 628Q672 629 674 637V672Q670 683 640 684L545 692L340 707C290 714 220 714 150 712Q136 708 135 700Z" fill="url(#edge)" />
          <path d="M135 681Q137 671 158 670L186 668C210 660 270 657 335 660L418 654C420 644 442 640 490 636L650 628Q670 630 670 634L604 642L540 665L340 689C280 694 200 690 150 688Z" fill="#8ab3b0" />
          <path d="M186 666C230 655 300 656 335 662" fill="none" stroke="#b8e2e0" stroke-width="4" />
          <path d="M420 652C440 645 480 643 520 642L660 632" fill="none" stroke="#a9d6d2" stroke-width="4" />
          <path d="M202 945Q240 955 346 944" fill="none" stroke="#587372" stroke-width="5" />
          <path d="M208 952L98 1024C74 1044 76 1092 98 1118C118 1138 164 1141 187 1116C203 1088 208 1050 220 1022ZM145 1054C161 1054 161 1090 145 1090S128 1054 145 1054Z" fill="#b78a78" fill-rule="evenodd" />
          <path d="M346 946L452 1004C478 1020 488 1062 472 1093C456 1122 409 1128 374 1103C355 1080 350 1044 336 1022ZM418 1038C433 1038 433 1075 418 1075S403 1038 418 1038Z" fill="#b78a78" fill-rule="evenodd" />
          <path d="M208 955L105 1024C82 1044 84 1087 104 1113C122 1134 160 1136 180 1118" fill="none" stroke="#d49f8a" stroke-width="5" />
          <path d="M344 952C360 985 355 1045 371 1082C390 1114 440 1123 465 1098" fill="none" stroke="#d09b86" stroke-width="5" />
          <path d="M151 1057C164 1062 164 1082 150 1088C155 1078 155 1066 151 1057ZM424 1041C437 1046 437 1067 423 1073C428 1063 428 1051 424 1041Z" fill="#dca58f" />
          <path d="M206 952L350 945L336 1028H222Z" fill="url(#copper)" />
          <path d="M240 1028H316L320 1146H244Z" fill="url(#green)" />
          <path d="M242 1145L323 1142V1149L300 1155H246Z" fill="#18e818" />
        </svg>

        <svg class="gizmo" viewBox="0 0 96 80" role="img" aria-label="Оси координат">
          <path d="M17 60H34" stroke="#236c23" stroke-width="4" />
          <path d="M34 60L70 57" stroke="#a82c2e" stroke-width="4" />
          <path d="M68 53L83 57L69 62Z" fill="#b02c2e" />
          <path d="M32 24L34 56" stroke="#4f8fc0" stroke-width="3" />
          <path d="M32 6L36 21H28Z" fill="#3266b0" />
          <circle cx="16" cy="60" r="4" fill="#35a035" />
          <circle cx="34" cy="60" r="7" fill="#a39b32" />
          <circle cx="32" cy="58" r="3" fill="#c4bd50" />
          <text x="27" y="2" fill="#294f9b">Z</text><text x="0" y="64" fill="#267326">Y</text><text x="85" y="62" fill="#a62426">X</text>
        </svg>
      </section>
    </main>
    <footer class="strip"><i class="strip-near"></i><i class="strip-mid"></i></footer>
  </div>
</template>

<style>
body { background: #333; }
.icon { width: 16px; height: 16px; flex: none; display: block; overflow: visible; font-family: "Noto Sans", sans-serif; }
.icon-italic { font-family: "Liberation Serif", serif; font-style: italic; }
.icon-serif { font-family: "Liberation Serif", serif; font-weight: bold; }
</style>

<style scoped>
.app { min-height: 100vh; padding: 0 144px; box-sizing: border-box; display: flex; flex-direction: column; background: #333; color: #d4d4d4; font: 12px/16px Lato, "Noto Sans", sans-serif; }
button { border: 0; padding: 0; margin: 0; background: none; color: inherit; font: inherit; }
h2 { margin: 0; font: 11px/16px "Open Sans", "Noto Sans", sans-serif; }

.ribbon { display: flex; border-bottom: 1px solid #000; overflow: hidden; }
.group { flex: none; display: flex; flex-direction: column; border-right: 1px solid #000; }
.tail { flex: 1; border-right: 0; }
.columns, .modes { height: 75px; background: #484848; }
.columns { display: flex; }
.column { width: 120px; }
.column.compact { width: 26px; }
.modes { width: 120px; }
.cmd { display: flex; align-items: center; width: 100%; height: 25px; text-align: left; }
.cmd.active { background: #000; color: #fff; }
.cmd:disabled { color: #868686; }
.slot { position: relative; flex: none; width: 26px; height: 25px; display: flex; align-items: center; justify-content: center; }
.corner { position: absolute; right: 2px; bottom: 3px; border: 3px solid transparent; border-right-color: #d4d4d4; border-bottom-color: #d4d4d4; }
.cmd-label { white-space: pre; line-height: 11px; padding-bottom: 2px; }
.group-foot { height: 17px; display: flex; align-items: center; justify-content: center; background: #333; font-size: 10px; padding-right: 2px; }
.group-title { flex: 1; min-width: 0; text-align: center; white-space: nowrap; }
.foot-arrow { width: 14px; display: flex; justify-content: center; }
.caret { border: 4px solid transparent; border-top-color: currentColor; border-bottom: 0; }
.grip { width: 4px; height: 9px; margin: 0 2px; background: repeating-linear-gradient(#bbb 0 1px, transparent 1px 2px); mask: linear-gradient(90deg, #000 0 1px, transparent 1px 3px, #000 3px); }
.expand { color: #d4d4d4; display: flex; }

.work { flex: 1; display: flex; min-height: 0; }
.rail { width: 26px; flex: none; display: flex; flex-direction: column; border-right: 1px solid #000; }
.tool { flex: none; width: 26px; height: 25px; display: flex; align-items: center; justify-content: center; background: #484848; }
.tool.narrow { width: 22px; }
.tool.on { background: #000; color: #fff; }
.tool.faded { color: #8c8c8c; }

.panel { flex: none; width: 463px; background: #484848; border-right: 1px solid #000; }
.panel-title { height: 16px; display: flex; align-items: center; justify-content: space-between; padding: 0 2px 0 3px; background: #333; border-bottom: 1px solid #000; }
.settings .icon { width: 13px; height: 13px; }
.panel-tools { display: flex; height: 25px; border-bottom: 1px solid #000; }
.split { width: 1px; margin-right: 1px; background: #000; }
.search-bar { display: flex; height: 25px; border-bottom: 1px solid #000; margin-bottom: 1px; }
.search { flex: 1; display: flex; align-items: center; gap: 2px; padding-left: 6px; background: #666; color: #bbb; }
.search input { flex: 1; border: 0; outline: 0; padding: 0; background: none; color: #fff; font: 12px/16px "Noto Sans", sans-serif; }
.search input::placeholder { color: #bbb; opacity: 1; }
.panel-tabs { display: flex; margin-top: 7px; border: solid #000; border-width: 1px 0; }

.tree-box { position: relative; }
.tree { list-style: none; margin: 0; padding: 0; font: 11px/16px "Open Sans", "Noto Sans", sans-serif; }
.row { display: flex; height: 26px; }
.state { width: 26px; flex: none; display: flex; align-items: center; justify-content: center; background: #333; border-bottom: 1px solid #000; }
.state .icon { color: #d4d4d4; }
.node { flex: 1; min-width: 0; overflow: hidden; display: flex; align-items: center; border-bottom: 1px solid #333; padding-top: 1px; white-space: nowrap; }
.dim .node { color: #868686; }
.selected .node { background: #426b73; border-color: #5bb5c2; }
.level-0 { padding-left: 11px; }
.level-1 { padding-left: 21px; }
.level-2 { padding-left: 31px; }
.level-3 { padding-left: 41px; }
.toggle { width: 10px; height: 10px; flex: none; margin-right: 3px; display: flex; align-items: center; justify-content: center; color: #d4d4d4; }
.toggle.open::before { content: ""; border: 3px solid transparent; border-top: 5px solid currentColor; border-bottom: 0; }
.toggle.closed::before { content: ""; border: 3px solid transparent; border-left: 5px solid currentColor; border-right: 0; }
.name { margin-left: 2px; }
.mark { width: 14px; flex: none; margin-left: 2px; text-align: center; }
.mark .icon { width: 14px; height: 14px; }
.mark + .name { margin-left: 1px; }
.scroll { position: absolute; top: 0; right: 0; bottom: 0; width: 10px; background: rgba(112, 112, 112, .8); }
.thumb { width: 8px; height: 91%; margin: 0 auto; background: rgba(176, 176, 176, .92); }

.viewport { position: relative; flex: 1; min-width: 0; background: linear-gradient(#4c4c4c, #333); }
.toolbar { position: absolute; top: 0; left: 410px; display: flex; border: 1px solid #000; border-top: 0; }
.toolbar-grip { width: 15px; background: #333; display: flex; justify-content: center; padding-top: 4px; }
.toolbar-grip i { width: 11px; height: 5px; background: repeating-linear-gradient(90deg, #bbb 0 2px, transparent 2px 3px); mask: linear-gradient(#000 0 2px, transparent 2px 3px, #000 3px); }
.tool-set { display: flex; border-left: 1px solid #000; gap: 1px; background: #484848; }
.model { position: absolute; top: 237px; left: 465px; width: 260px; height: 400px; }
.gizmo { position: absolute; left: 39px; bottom: 54px; width: 96px; height: 80px; overflow: visible; font: 12px "Liberation Serif", serif; }
.strip { height: 2px; display: flex; background: #17131b; }
.strip-near { width: 288px; margin-left: 48px; background: #4c4a4d; }
.strip-mid { width: 46px; margin-left: 639px; background: #4c4a4d; }
</style>
